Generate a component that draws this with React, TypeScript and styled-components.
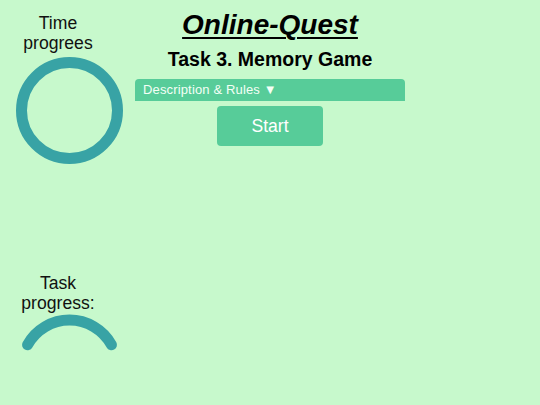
import React from "react";
import styled, { createGlobalStyle } from "styled-components";

const GlobalStyle = createGlobalStyle`
  html, body {
    margin: 0;
    padding: 0;
    background: #c7f9cc;
  }
  body {
    font-family: "Liberation Sans", Arial, sans-serif;
    color: #000;
    width: 540px;
    height: 405px;
    overflow: hidden;
  }
`;

const Page = styled.div`
  display: grid;
  grid-template-columns: 135px 270px 1fr;
  width: 540px;
  height: 405px;
  background: #c7f9cc;
`;

const Sidebar = styled.aside`
  display: flex;
  flex-direction: column;
  width: 116px;
  padding-top: 13px;
`;

const Label = styled.div<{ $gapTop?: number }>`
  font-size: 17.6px;
  line-height: 20px;
  text-align: center;
  color: #111;
  margin-top: ${(p) => p.$gapTop ?? 0}px;
`;

const Gauge = styled.svg<{ $gapTop: number }>`
  display: block;
  margin-left: 16px;
  margin-top: ${(p) => p.$gapTop}px;
  overflow: visible;
`;

const Main = styled.main`
  display: flex;
  flex-direction: column;
  align-items: center;
  padding-top: 9px;
`;

const Title = styled.h1`
  margin: 0;
  font-size: 28px;
  line-height: 32px;
  font-weight: 700;
  font-style: italic;
  text-decoration: underline;
  text-decoration-thickness: 2px;
  text-underline-offset: 3px;
`;

const Subtitle = styled.h2`
  margin: 7px 0 0;
  font-size: 19.5px;
  line-height: 22px;
  font-weight: 700;
`;

const Disclosure = styled.div`
  align-self: stretch;
  margin-top: 9px;
  height: 22px;
  line-height: 22px;
  padding: 0 8px;
  font-size: 13px;
  letter-spacing: 0.15px;
  color: #f4fff6;
  background: #57cc99;
  border-radius: 4px 4px 0 0;
  cursor: pointer;
`;

const StartButton = styled.button`
  margin-top: 5px;
  width: 106px;
  height: 40px;
  border: none;
  border-radius: 4px;
  background: #57cc99;
  color: #fff;
  font-family: "Liberation Sans", Arial, sans-serif;
  font-size: 17.6px;
  cursor: pointer;
`;

const TEAL = "#38a3a5";

export default function App() {
  return (
    <>
      <GlobalStyle />
      <Page>
        <Sidebar>
          <Label>
            Time
            <br />
            progrees
          </Label>
          <Gauge $gapTop={4} width={107} height={107} viewBox="0 0 107 107">
            <circle cx={53.5} cy={53.5} r={48} fill="none" stroke={TEAL} strokeWidth={11} />
          </Gauge>
          <Label $gapTop={109}>
            Task
            <br />
            progress:
          </Label>
          <Gauge $gapTop={0} width={107} height={40} viewBox="0 0 107 40">
            <path
              d="M 11.5 31.8 A 48 48 0 0 1 95.5 31.8"
              fill="none"
              stroke={TEAL}
              strokeWidth={11}
              strokeLinecap="round"
            />
          </Gauge>
        </Sidebar>
        <Main>
          <Title>Online-Quest</Title>
          <Subtitle>Task 3. Memory Game</Subtitle>
          <Disclosure>Description &amp; Rules ▼</Disclosure>
          <StartButton>Start</StartButton>
        </Main>
      </Page>
    </>
  );
}
